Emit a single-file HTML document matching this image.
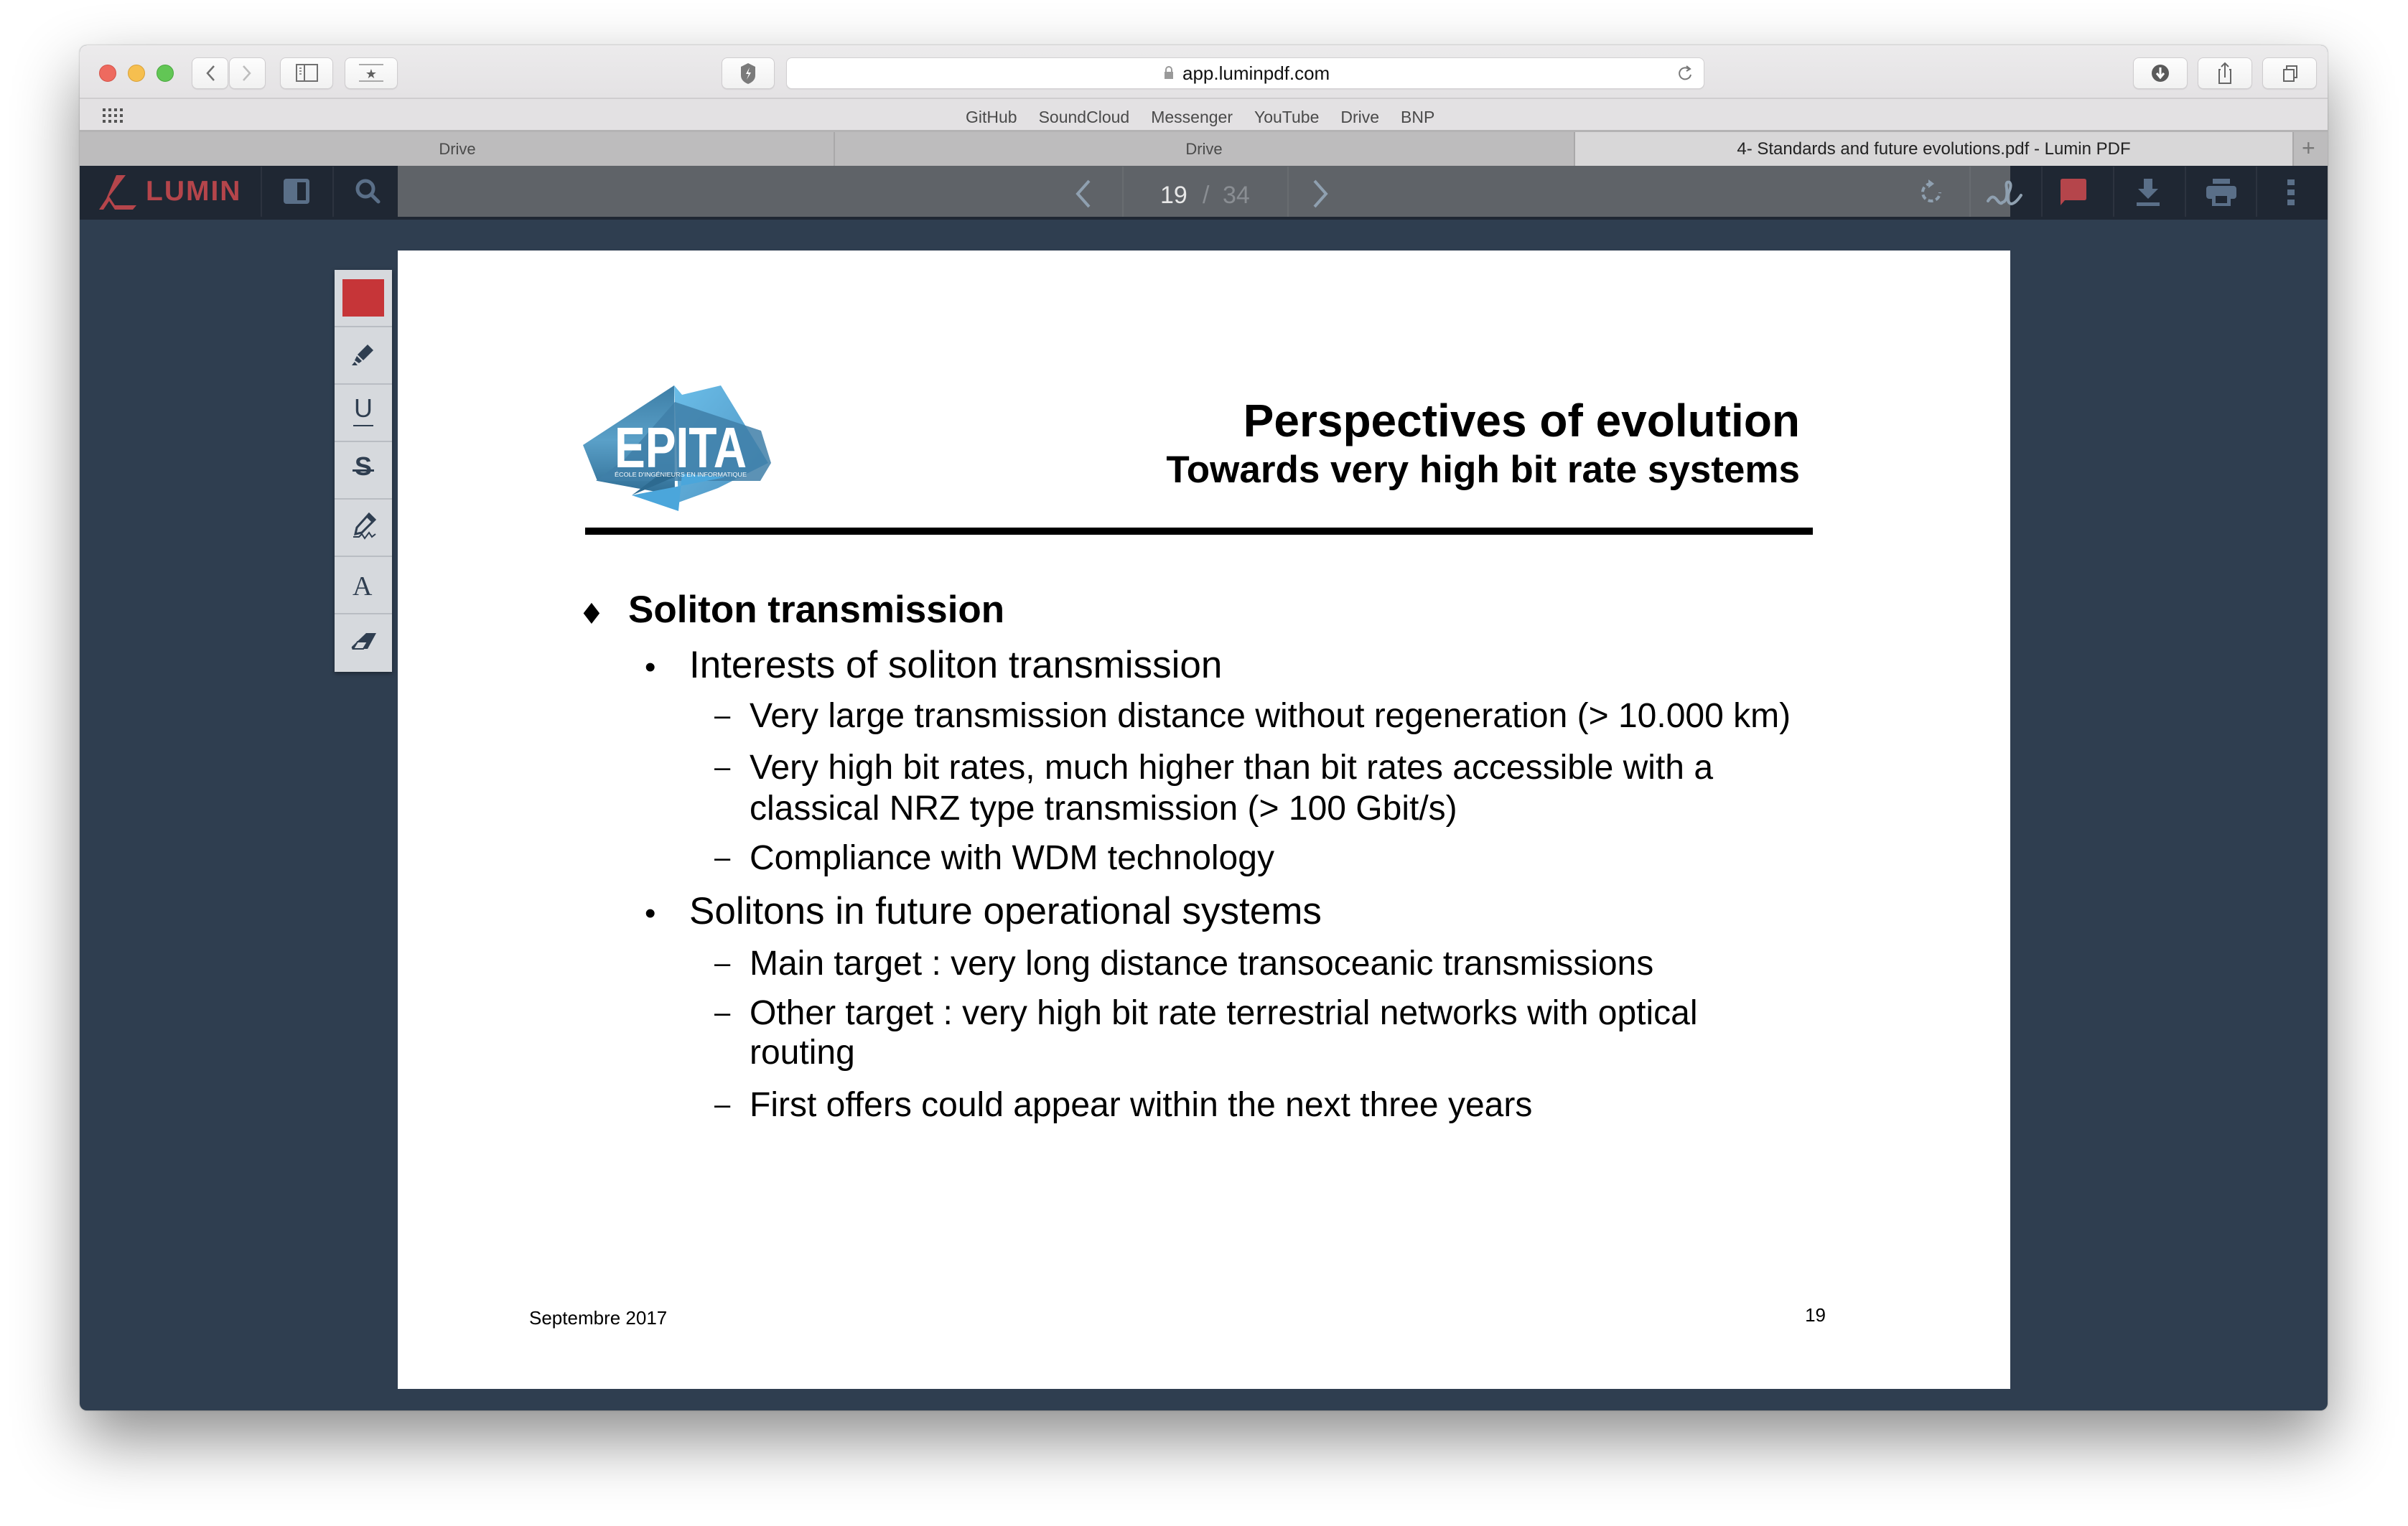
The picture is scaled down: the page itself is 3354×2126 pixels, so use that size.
<!DOCTYPE html>
<html><head><meta charset="utf-8">
<style>
*{margin:0;padding:0;box-sizing:border-box}
html,body{width:3354px;height:2126px;background:#fff;overflow:hidden;font-family:"Liberation Sans",Arial,sans-serif}
.a{position:absolute}
.t{position:absolute;line-height:1;white-space:nowrap;color:#000}
.btn{position:absolute;background:linear-gradient(#fdfdfd,#f1f1f1);border:1px solid #cfcdcf;border-radius:8px;box-shadow:0 1px 1px rgba(0,0,0,.08)}
.sep{position:absolute;width:2px;background:rgba(255,255,255,.06)}
.cell{position:absolute;left:0;width:80px;height:80px;border-bottom:2px solid #b9bdc3}
.bm{margin-right:30px}
</style></head><body>
<div class="a" style="left:111px;top:63px;width:3131px;height:1902px;border-radius:10px;background:#2f3e50;box-shadow:0 40px 90px rgba(0,0,0,.45),0 0 2px rgba(0,0,0,.3);overflow:hidden">
 <div class="a" style="left:0;top:0;width:3131px;height:75px;background:linear-gradient(#ecebec,#e4e2e4);border-bottom:2px solid #cfcdcf"></div>
 <div class="a" style="left:0;top:75px;width:3131px;height:46px;background:#e3e1e3;border-bottom:3px solid #b4b3b4"></div>
 <div class="a" style="left:0;top:121px;width:3131px;height:47px;background:#bdbcbd"></div>
 <div class="a" style="left:1050px;top:121px;width:2px;height:47px;background:#a9a8a9"></div>
 <div class="a" style="left:2081px;top:121px;width:1003px;height:47px;background:#d8d7d8;border-left:2px solid #a9a8a9;border-right:2px solid #a9a8a9"></div>
 <div class="a" style="left:0;top:168px;width:3131px;height:75px;background:#1f2733"></div>
 <div class="a" style="left:443px;top:168px;width:2246px;height:71px;background:#5f6368"></div>
</div>

<div class="a" style="left:138px;top:90px;width:24px;height:24px;border-radius:50%;background:#ee6a5f;border:1px solid #d5534a"></div>
<div class="a" style="left:178px;top:90px;width:24px;height:24px;border-radius:50%;background:#f6bf4f;border:1px solid #d9a13a"></div>
<div class="a" style="left:218px;top:90px;width:24px;height:24px;border-radius:50%;background:#62c655;border:1px solid #4aa83f"></div>
<div class="btn" style="left:267px;top:80px;width:51px;height:44px"></div>
<div class="btn" style="left:319px;top:80px;width:51px;height:44px"></div>
<svg class="a" style="left:267px;top:80px" width="103" height="44"><path d="M31 12 L22 22 L31 32" stroke="#707070" stroke-width="2.5" fill="none"/><path d="M72 12 L81 22 L72 32" stroke="#bdbdbd" stroke-width="2.5" fill="none"/></svg>
<div class="btn" style="left:390px;top:80px;width:74px;height:44px"></div>
<svg class="a" style="left:390px;top:80px" width="74" height="44"><rect x="23" y="10" width="29" height="23" fill="none" stroke="#707070" stroke-width="2"/><line x1="34" y1="10" x2="34" y2="33" stroke="#707070" stroke-width="2"/><path d="M27 15h3M27 19h3M27 23h3" stroke="#707070" stroke-width="1.5"/></svg>
<div class="btn" style="left:480px;top:80px;width:74px;height:44px"></div>
<svg class="a" style="left:480px;top:80px" width="74" height="44"><line x1="20" y1="10" x2="54" y2="10" stroke="#909090" stroke-width="1.5"/><line x1="20" y1="33" x2="54" y2="33" stroke="#909090" stroke-width="1.5"/><text x="37" y="29" font-size="18" text-anchor="middle" fill="#606060" font-family="DejaVu Sans">★</text></svg>
<div class="btn" style="left:1005px;top:80px;width:74px;height:44px"></div>
<svg class="a" style="left:1005px;top:80px" width="74" height="44"><path d="M37 8 L47 13 L47 25 Q47 33 37 37 Q27 33 27 25 L27 13 Z" fill="#7a7a7a"/><path d="M39 14 L34 23 L38 23 L35 31 L41 21 L37 21 Z" fill="#fff"/></svg>
<div class="a" style="left:1095px;top:80px;width:1279px;height:44px;background:#fff;border:1px solid #d2d0d2;border-radius:8px;box-shadow:0 1px 1px rgba(0,0,0,.06)"></div>
<svg class="a" style="left:1620px;top:90px" width="16" height="22"><path d="M4 10 V7 a4 4 0 0 1 8 0 V10" stroke="#9a9a9a" stroke-width="2" fill="none"/><rect x="2" y="10" width="12" height="10" fill="#9a9a9a"/></svg>
<div class="t" style="left:1647px;top:89px;font-size:26px;color:#111">app.luminpdf.com</div>
<svg class="a" style="left:2335px;top:88px" width="24" height="28"><path d="M17 8 A8 8 0 1 0 20 16" stroke="#777" stroke-width="2" fill="none"/><path d="M14 4 L19 8 L14 11" stroke="#777" stroke-width="2" fill="none"/></svg>
<div class="btn" style="left:2971px;top:80px;width:76px;height:44px"></div>
<svg class="a" style="left:2971px;top:80px" width="76" height="44"><circle cx="38" cy="22" r="12" fill="#5a5a5a"/><path d="M38 14 V27 M33 22 L38 28 L43 22" stroke="#fff" stroke-width="3" fill="none"/></svg>
<div class="btn" style="left:3061px;top:80px;width:76px;height:44px"></div>
<svg class="a" style="left:3061px;top:80px" width="76" height="44"><path d="M32 17 H30 V36 H46 V17 H44" stroke="#666" stroke-width="2" fill="none"/><path d="M38 28 V8 M33 13 L38 8 L43 13" stroke="#666" stroke-width="2" fill="none"/></svg>
<div class="btn" style="left:3151px;top:80px;width:76px;height:44px"></div>
<svg class="a" style="left:3151px;top:80px" width="76" height="44"><rect x="30" y="17" width="14" height="16" fill="none" stroke="#666" stroke-width="2"/><path d="M34 17 V12 H48 V28 H44" stroke="#666" stroke-width="2" fill="none"/></svg>

<svg class="a" style="left:143px;top:151px" width="30" height="22"><g fill="#555"><rect x="0" y="0" width="4" height="4"/><rect x="8" y="0" width="4" height="4"/><rect x="16" y="0" width="4" height="4"/><rect x="24" y="0" width="4" height="4"/><rect x="0" y="8" width="4" height="4"/><rect x="8" y="8" width="4" height="4"/><rect x="16" y="8" width="4" height="4"/><rect x="24" y="8" width="4" height="4"/><rect x="0" y="16" width="4" height="4"/><rect x="8" y="16" width="4" height="4"/><rect x="16" y="16" width="4" height="4"/><rect x="24" y="16" width="4" height="4"/></g></svg>
<div class="t" style="left:1345px;top:152px;font-size:23px;color:#4a4a4a"><span class="bm">GitHub</span><span class="bm">SoundCloud</span><span class="bm">Messenger</span><span class="bm">YouTube</span><span class="bm">Drive</span><span>BNP</span></div>

<div class="t" style="left:537px;top:197px;width:200px;text-align:center;font-size:22px;color:#4a4a4a">Drive</div>
<div class="t" style="left:1577px;top:197px;width:200px;text-align:center;font-size:22px;color:#4a4a4a">Drive</div>
<div class="t" style="left:2192px;top:196px;width:1003px;text-align:center;font-size:24px;color:#222">4- Standards and future evolutions.pdf - Lumin PDF</div>
<div class="t" style="left:3206px;top:190px;font-size:32px;color:#777">+</div>

<svg class="a" style="left:138px;top:244px" width="54" height="50"><path d="M24 0 H37 L14 30 L22 42 H52 L47 48 H22 L14 36 L6 48 H0 L10 33 Z" fill="#b5454b"/></svg>
<div class="t" style="left:203px;top:247px;font-size:39px;font-weight:bold;color:#b5454b;letter-spacing:2px">LUMIN</div>
<div class="sep" style="left:363px;top:232px;height:70px"></div>
<div class="sep" style="left:463px;top:232px;height:70px"></div>
<svg class="a" style="left:395px;top:249px" width="36" height="36"><rect x="0" y="0" width="36" height="35" rx="4" fill="#5a6f88"/><rect x="19" y="5" width="12" height="25" fill="#1f2733"/></svg>
<svg class="a" style="left:493px;top:247px" width="40" height="40"><circle cx="16" cy="16" r="11" stroke="#5a6f88" stroke-width="5" fill="none"/><path d="M24 24 L34 34" stroke="#5a6f88" stroke-width="5" stroke-linecap="round"/></svg>
<div class="sep" style="left:1563px;top:232px;height:70px"></div>
<div class="sep" style="left:1793px;top:232px;height:70px"></div>
<svg class="a" style="left:1495px;top:250px" width="30" height="40"><path d="M22 2 L6 20 L22 38" stroke="#8fa0b0" stroke-width="4" fill="none"/></svg>
<svg class="a" style="left:1825px;top:250px" width="30" height="40"><path d="M6 2 L22 20 L6 38" stroke="#8fa0b0" stroke-width="4" fill="none"/></svg>
<div class="t" style="left:1616px;top:255px;font-size:34px;color:#e8e8e8">19</div>
<div class="t" style="left:1675px;top:255px;font-size:34px;color:#8a8e93">/</div>
<div class="t" style="left:1703px;top:255px;font-size:34px;color:#8a8e93">34</div>
<div class="sep" style="left:2743px;top:232px;height:70px"></div>
<div class="sep" style="left:2843px;top:232px;height:70px"></div>
<div class="sep" style="left:2943px;top:232px;height:70px"></div>
<div class="sep" style="left:3043px;top:232px;height:70px"></div>
<div class="sep" style="left:3142px;top:232px;height:70px"></div>
<svg class="a" style="left:2670px;top:248px" width="40" height="40"><path d="M20 8 A12 12 0 1 0 32 20" stroke="#8fa0b0" stroke-width="4" fill="none" stroke-dasharray="7 4"/><path d="M16 2 L24 8 L16 14 Z" fill="#8fa0b0"/></svg>
<svg class="a" style="left:2767px;top:250px" width="52" height="40"><path d="M2 30 Q8 20 14 28 T22 32 Q30 30 28 12 Q26 2 32 4 Q36 8 30 20 Q28 32 34 34 Q40 34 48 22" stroke="#8fa0b0" stroke-width="4" fill="none" stroke-linecap="round"/></svg>
<svg class="a" style="left:2870px;top:249px" width="38" height="38"><path d="M3 0 H33 Q36 0 36 3 V27 Q36 30 33 30 H6 L0 37 V3 Q0 0 3 0 Z" fill="#b5454b"/></svg>
<svg class="a" style="left:2975px;top:249px" width="34" height="38"><path d="M11 0 H23 V14 H31 L17 28 L3 14 H11 Z" fill="#5a6f88"/><rect x="1" y="33" width="32" height="5" fill="#5a6f88"/></svg>
<svg class="a" style="left:3073px;top:249px" width="42" height="38"><rect x="9" y="0" width="24" height="7" fill="#5a6f88"/><rect x="0" y="10" width="42" height="18" rx="4" fill="#5a6f88"/><rect x="8" y="22" width="26" height="16" fill="#5a6f88"/><rect x="13" y="24" width="16" height="10" fill="#1f2733"/></svg>
<svg class="a" style="left:3185px;top:250px" width="14" height="38"><rect x="1" y="0" width="10" height="8" fill="#5a6f88"/><rect x="1" y="14" width="10" height="8" fill="#5a6f88"/><rect x="1" y="28" width="10" height="8" fill="#5a6f88"/></svg>

<div class="a" style="left:466px;top:376px;width:80px;height:560px;background:#d6d9dd;box-shadow:0 2px 6px rgba(0,0,0,.4)">
 <div class="cell" style="top:0"><div class="a" style="left:11px;top:13px;width:58px;height:52px;background:#c63538"></div></div>
 <div class="cell" style="top:80px"><svg class="a" style="left:24px;top:22px" width="34" height="34"><path d="M22 2 L30 10 L16 24 L8 16 Z" fill="#2f3e50"/><path d="M7 18 L14 25 L10 28 L4 24 Z" fill="#2f3e50"/><path d="M4 26 L0 31 H8 Z" fill="#2f3e50"/></svg></div>
 <div class="cell" style="top:160px"><div class="t" style="left:27px;top:15px;font-size:36px;color:#2f3e50">U</div><div class="a" style="left:26px;top:56px;width:28px;height:2px;background:#2f3e50"></div></div>
 <div class="cell" style="top:240px"><div class="t" style="left:28px;top:16px;font-size:36px;font-weight:bold;color:#2f3e50">S</div><div class="a" style="left:25px;top:38px;width:30px;height:3px;background:#2f3e50"></div></div>
 <div class="cell" style="top:320px"><svg class="a" style="left:24px;top:18px" width="36" height="40"><path d="M24 2 L32 10 L14 28 L5 30 L7 21 Z" fill="none" stroke="#2f3e50" stroke-width="3"/><path d="M24 2 L32 10 L28 14 L20 6 Z" fill="#2f3e50"/><path d="M2 34 H10 L14 30 L18 36 L24 28 L28 34 L33 30" stroke="#2f3e50" stroke-width="2" fill="none"/></svg></div>
 <div class="cell" style="top:400px"><div class="t" style="left:25px;top:22px;font-size:38px;font-family:'Liberation Serif',serif;color:#2f3e50">A</div></div>
 <div class="cell" style="top:480px;border-bottom:none"><svg class="a" style="left:22px;top:24px" width="38" height="28"><path d="M22 2 H36 L24 24 H4 Q1 24 2 21 Z" fill="#2f3e50"/><path d="M10 14 L4 24 H18 L24 14 Z" fill="#d6d9dd" stroke="#2f3e50" stroke-width="2"/></svg></div>
</div>

<div class="a" style="left:554px;top:349px;width:2246px;height:1586px;background:#fff"></div>

<svg class="a" style="left:805px;top:530px" width="275" height="190" viewBox="805 530 275 190">
 <defs><linearGradient id="g1" x1="0" y1="0" x2="0" y2="1"><stop offset="0" stop-color="#3d7ea6"/><stop offset=".5" stop-color="#5aa0c8"/><stop offset="1" stop-color="#2f6d94"/></linearGradient>
 <linearGradient id="g2" x1="0" y1="0" x2="1" y2="1"><stop offset="0" stop-color="#5ab6e6"/><stop offset="1" stop-color="#3a86b8"/></linearGradient></defs>
 <polygon points="812,620 939,537 940,690 832,670" fill="url(#g1)"/>
 <polygon points="939,537 950,550 1004,537 1070,645 1000,680 945,700" fill="url(#g2)" opacity=".9"/>
 <polygon points="940,560 1060,600 1074,645 1059,670 830,670 870,640" fill="#3f7fa8" opacity=".85"/>
 <polygon points="880,690 945,712 950,660 1010,665" fill="#4ba6db"/>
 <polygon points="880,690 920,660 950,660" fill="#2d6a90"/>
 <text x="856" y="651" font-family="Liberation Sans" font-weight="bold" font-size="80" fill="#fff" textLength="184" lengthAdjust="spacingAndGlyphs">EPITA</text>
 <text x="856" y="664" font-family="Liberation Sans" font-size="8" fill="#fff" textLength="184" lengthAdjust="spacingAndGlyphs">ÉCOLE D'INGÉNIEURS EN INFORMATIQUE</text>
</svg>

<div class="t" style="right:847px;top:554px;font-size:64px;font-weight:bold">Perspectives of evolution</div>
<div class="t" style="right:847px;top:628px;font-size:53px;font-weight:bold">Towards very high bit rate systems</div>
<div class="a" style="left:815px;top:735px;width:1710px;height:10px;background:#000"></div>

<div class="t" style="left:806px;top:836px;font-size:40px;font-family:'DejaVu Sans',sans-serif">♦</div>
<div class="t" style="left:875px;top:823px;font-size:53px;font-weight:bold">Soliton transmission</div>

<div class="t" style="left:898px;top:908px;font-size:44px">•</div>
<div class="t" style="left:960px;top:900px;font-size:53px">Interests of soliton transmission</div>
<div class="t" style="left:995px;top:977px;font-size:40px">–</div>
<div class="t" style="left:1044px;top:974px;font-size:48px">Very large transmission distance without regeneration (&gt; 10.000 km)</div>
<div class="t" style="left:995px;top:1049px;font-size:40px">–</div>
<div class="t" style="left:1044px;top:1046px;font-size:48px">Very high bit rates, much higher than bit rates accessible with a</div>
<div class="t" style="left:1044px;top:1103px;font-size:48px">classical NRZ type transmission (&gt; 100 Gbit/s)</div>
<div class="t" style="left:995px;top:1175px;font-size:40px">–</div>
<div class="t" style="left:1044px;top:1172px;font-size:48px">Compliance with WDM technology</div>

<div class="t" style="left:898px;top:1251px;font-size:44px">•</div>
<div class="t" style="left:960px;top:1243px;font-size:53px">Solitons in future operational systems</div>
<div class="t" style="left:995px;top:1322px;font-size:40px">–</div>
<div class="t" style="left:1044px;top:1319px;font-size:48px">Main target : very long distance transoceanic transmissions</div>
<div class="t" style="left:995px;top:1391px;font-size:40px">–</div>
<div class="t" style="left:1044px;top:1388px;font-size:48px">Other target : very high bit rate terrestrial networks with optical</div>
<div class="t" style="left:1044px;top:1443px;font-size:48px">routing</div>
<div class="t" style="left:995px;top:1519px;font-size:40px">–</div>
<div class="t" style="left:1044px;top:1516px;font-size:48px">First offers could appear within the next three years</div>

<div class="t" style="left:737px;top:1823px;font-size:26px">Septembre 2017</div>
<div class="t" style="right:811px;top:1819px;font-size:26px">19</div>
</body></html>
